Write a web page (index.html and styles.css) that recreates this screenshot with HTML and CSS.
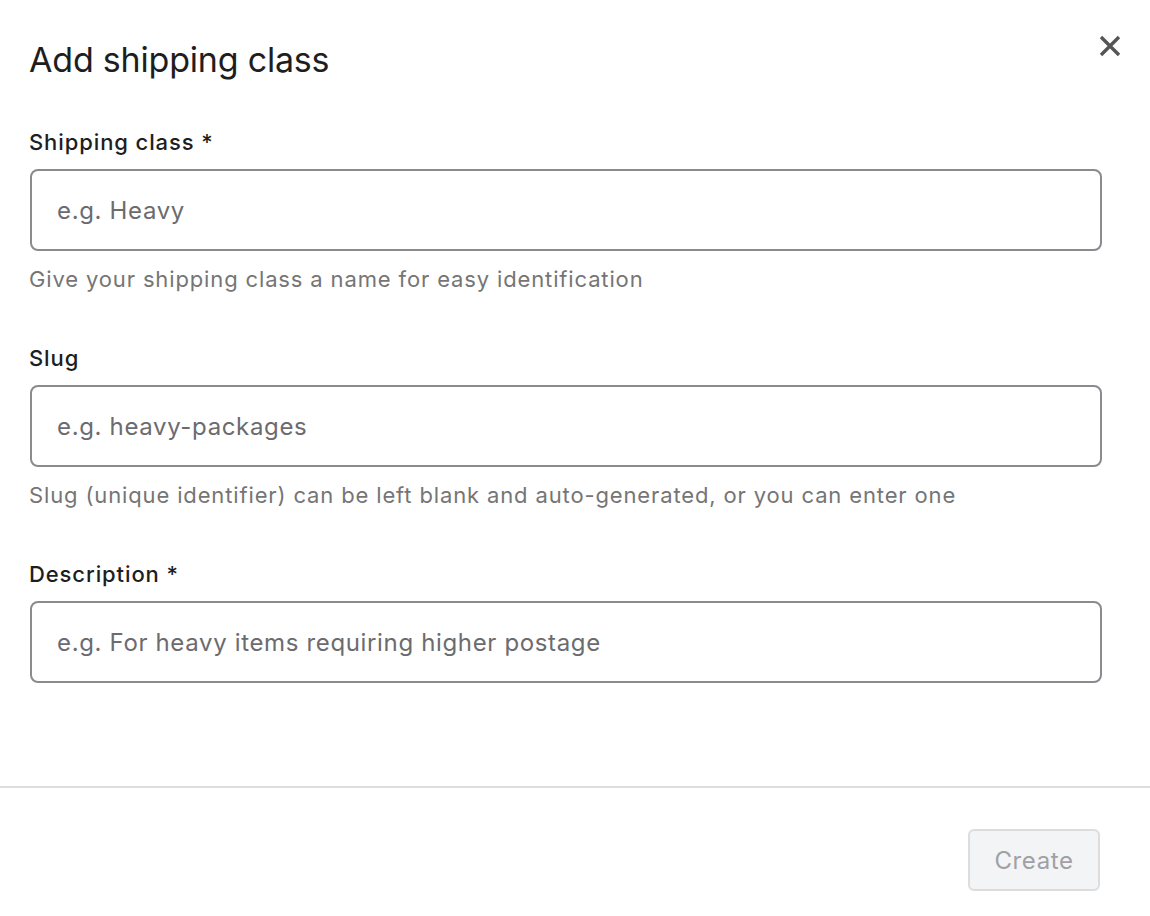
FILE: index.html
```html
<!DOCTYPE html>
<html lang="en">
<head>
<meta charset="utf-8">
<title>Add shipping class</title>
<link rel="stylesheet" href="styles.css">
</head>
<body>
<div class="modal">
  <div class="modal-header">
    <h1 class="modal-title">Add shipping class</h1>
    <button class="close-btn" aria-label="Close">
      <svg width="24" height="24" viewBox="0 0 24 24"><path d="M3 3 L21 21 M21 3 L3 21" stroke="#555" stroke-width="3.4" stroke-linecap="butt"/></svg>
    </button>
  </div>
  <div class="modal-body">
    <div class="field">
      <label class="field-label">Shipping class *</label>
      <input class="field-input" type="text" placeholder="e.g. Heavy">
      <p class="field-help">Give your shipping class a name for easy identification</p>
    </div>
    <div class="field">
      <label class="field-label">Slug</label>
      <input class="field-input" type="text" placeholder="e.g. heavy-packages">
      <p class="field-help">Slug (unique identifier) can be left blank and auto-generated, or you can enter one</p>
    </div>
    <div class="field">
      <label class="field-label">Description *</label>
      <input class="field-input" type="text" placeholder="e.g. For heavy items requiring higher postage">
    </div>
  </div>
  <div class="modal-footer">
    <button class="create-btn" disabled>Create</button>
  </div>
</div>
</body>
</html>
```

FILE: styles.css
```css
html, body {
  margin: 0;
  padding: 0;
  background: #ffffff;
}
body {
  font-family: Inter, "Noto Sans", "Liberation Sans", sans-serif;
  color: #1e1e1e;
}
.modal {
  width: 1150px;
  height: 916px;
  display: flex;
  flex-direction: column;
}
.modal-header {
  display: flex;
  align-items: flex-start;
  justify-content: space-between;
  padding: 38px 28px 0 29px;
}
.modal-title {
  margin: 0;
  font-size: 34px;
  line-height: 44px;
  font-weight: 400;
  color: #1e1e1e;
  letter-spacing: -0.2px;
}
.close-btn {
  background: none;
  border: 0;
  padding: 0;
  margin-top: -4px;
  width: 24px;
  height: 24px;
  cursor: pointer;
}
.close-btn svg { display: block; }
.modal-body {
  padding: 44px 48px 0 30px;
  display: flex;
  flex-direction: column;
}
.field {
  display: flex;
  flex-direction: column;
  margin-bottom: 48px;
}
.field:last-child { margin-bottom: 0; }
.field-label {
  font-size: 22px;
  line-height: 32px;
  font-weight: 500;
  letter-spacing: 0.9px;
  color: #1e1e1e;
  margin: 0 0 11px -1px;
}
.field-input {
  box-sizing: border-box;
  height: 82px;
  width: 100%;
  border: 2px solid #8a8a8f;
  border-radius: 8px;
  padding: 0 25px;
  font-family: inherit;
  font-size: 24px;
  letter-spacing: 0.65px;
  color: #1e1e1e;
  background: #fff;
  outline: none;
}
.field-input::placeholder {
  color: #6b6b70;
  opacity: 1;
}
.field-help {
  margin: 13px 0 0 -1px;
  font-size: 22px;
  line-height: 30px;
  letter-spacing: 0.86px;
  color: #757575;
}
.modal-footer {
  border-top: 2px solid #dddddd;
  display: flex;
  justify-content: flex-end;
  padding: 41px 50px 25px 0;
  margin-top: 103px;
}
.create-btn {
  box-sizing: border-box;
  width: 132px;
  height: 62px;
  background: #f3f4f5;
  border: 2px solid #dddddd;
  border-radius: 6px;
  font-family: inherit;
  font-size: 24px;
  letter-spacing: 0.6px;
  color: #a0a0a5;
  padding: 0;
}
```
